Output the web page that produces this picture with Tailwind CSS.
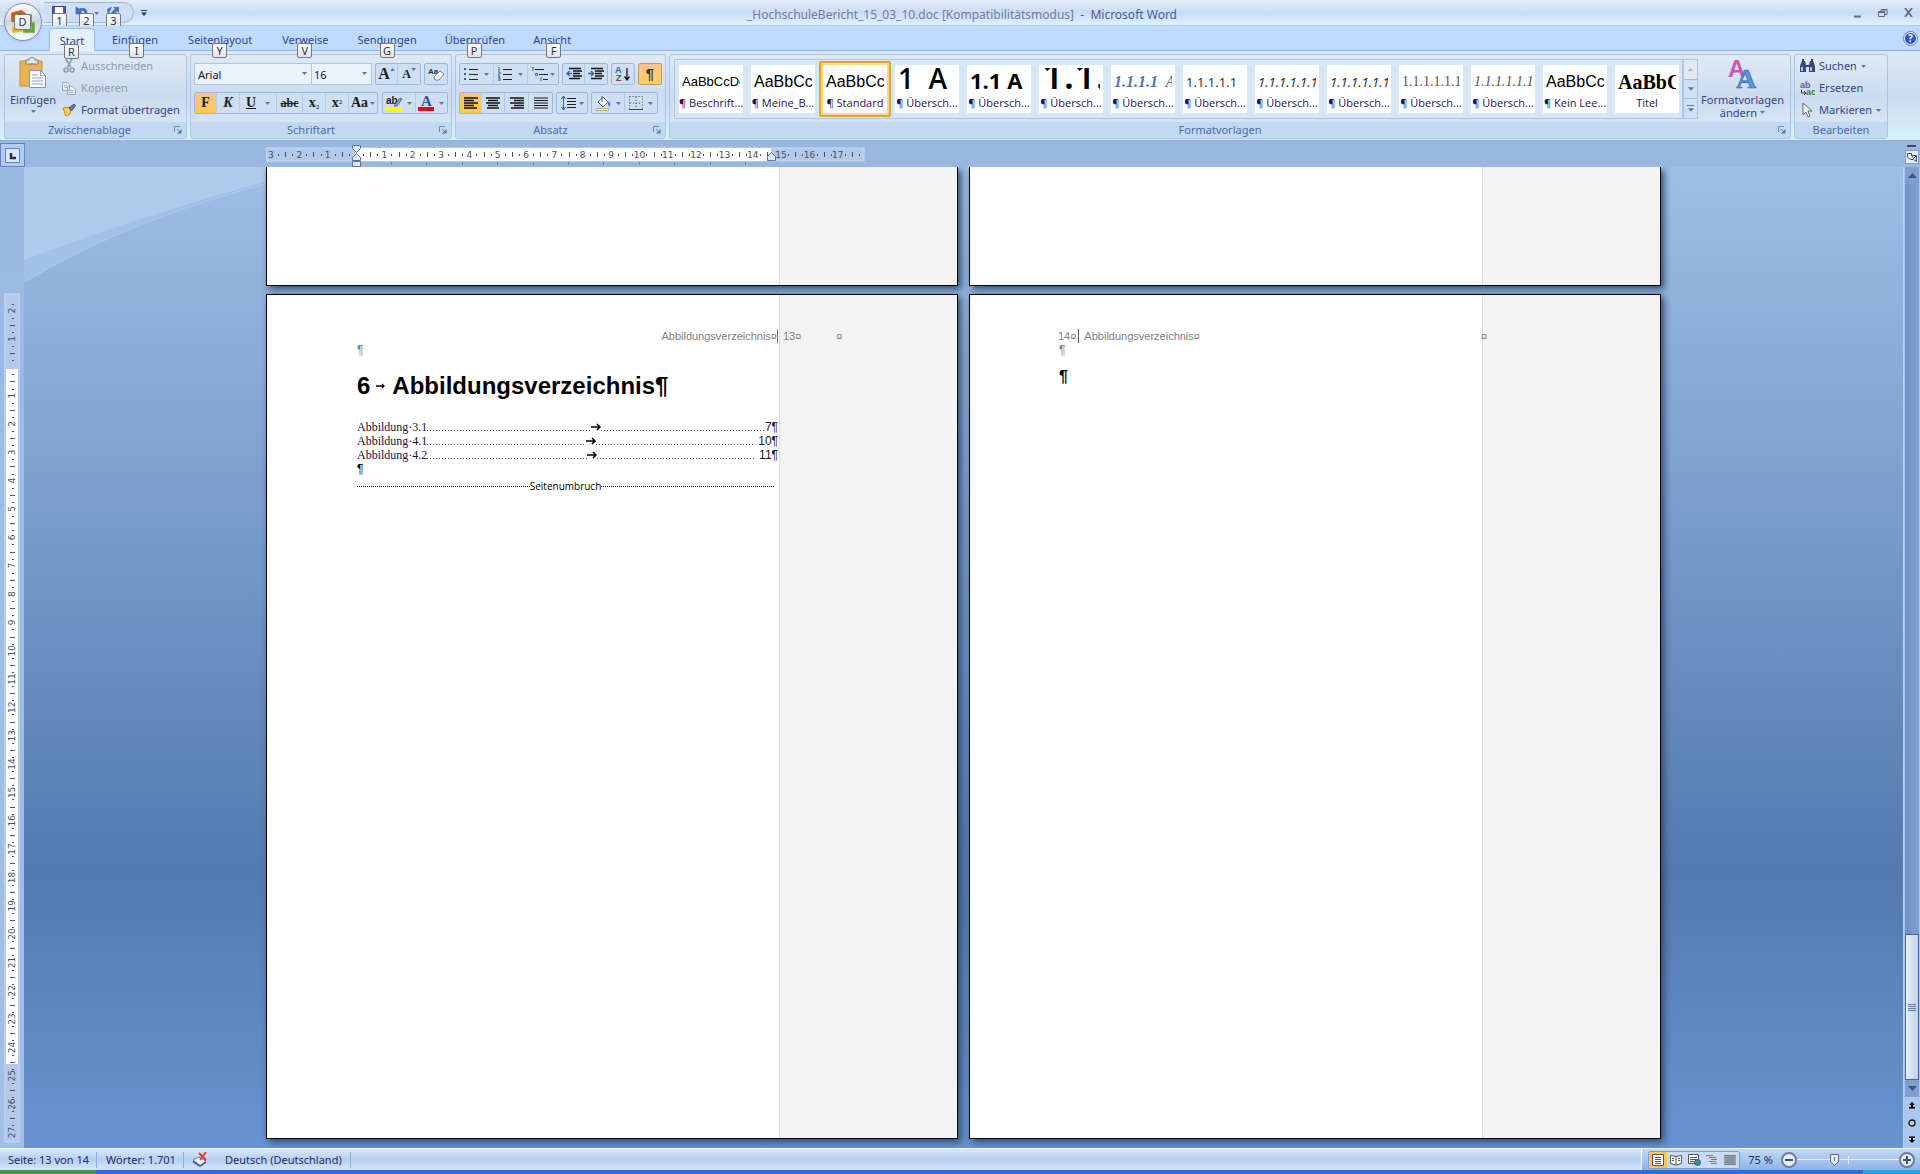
<!DOCTYPE html>
<html lang="de">
<head>
<meta charset="UTF-8">
<meta name="viewport" content="width=device-width, initial-scale=1.0">
<title>_HochschuleBericht_15_03_10.doc - Microsoft Word</title>
<script src="https://cdn.jsdelivr.net/npm/@tailwindcss/browser@4"></script>
</head>
<body class="h-screen flex flex-col overflow-hidden bg-[#9ab7e0] font-['Noto_Sans',sans-serif] text-[11px] leading-4 text-[#35418c]">

<!-- shared symbols -->
<svg class="hidden">
    <symbol id="down" viewBox="0 0 5 3"><path d="M0 0h5L2.500 3z" fill="#5b76a8"/></symbol>
    <symbol id="launcher" viewBox="0 0 8 8"><path d="M.5 6V.5H6" fill="none" stroke="#6b8bbd"/><path d="M3 3l3 3" stroke="#6b8bbd"/><path d="M7.500 3v4.500H3z" fill="#5878ae"/></symbol>
    <symbol id="bars" viewBox="0 0 14 12"><path d="M0 1h14M0 3.500h14M0 6h14M0 8.500h14M0 11h14" stroke="currentColor" stroke-width="1.200"/></symbol>
</svg>

<!-- Title bar -->
<header class="relative h-[26px] shrink-0 flex items-center bg-linear-to-b from-[#e3ecf8] via-[#cadcf5] to-[#dff0fd] border-b border-[#a9cbe8]">
    <div class="ml-[44px] h-[21px] w-[90px] flex items-start gap-[9px] pt-[3px] pl-[8px] rounded-r-full border border-l-0 border-[#9fb9dc] bg-[#cfe0f6]">
        <button aria-label="Speichern" class="relative">
            <svg class="w-[14px] h-[14px]" viewBox="0 0 14 14"><path d="M.5.5h13v13H.5z" fill="#5b58b4" stroke="#3c3a8c"/><path d="M3 1h8v6H3z" fill="#fff"/><path d="M4 9h6v4H4z" fill="#ccd"/></svg>
            <span class="absolute left-0 top-[7px] w-[15px] h-[15px] leading-[13px] text-center rounded-xs border border-[#777] bg-linear-to-b from-white to-[#dde3ee] text-[#333]">1</span>
        </button>
        <button aria-label="Rückgängig" class="relative flex items-center gap-[5px]">
            <svg class="w-[14px] h-[14px]" viewBox="0 0 14 14"><path d="M1 1v7h7L5.500 5.500C9 3 11 6 9 12c5-4 4-12-5-9z" fill="#4574c8" stroke="#2f57a5" stroke-width=".6"/></svg>
            <svg class="w-[5px] h-[3px]"><use href="#down"/></svg>
            <span class="absolute left-[4px] top-[7px] w-[15px] h-[15px] leading-[13px] text-center rounded-xs border border-[#777] bg-linear-to-b from-white to-[#dde3ee] text-[#333]">2</span>
        </button>
        <button aria-label="Wiederholen" class="relative -ml-[2px]">
            <svg class="w-[14px] h-[14px]" viewBox="0 0 14 14"><path d="M7 1h6v6l-2-2c-3 6-7 8-8 8 0-5 2-7 6-10zM1 4c1-2 3-3 5-3L2 9z" fill="#4574c8"/></svg>
            <span class="absolute left-0 top-[7px] w-[15px] h-[15px] leading-[13px] text-center rounded-xs border border-[#777] bg-linear-to-b from-white to-[#dde3ee] text-[#333]">3</span>
        </button>
    </div>
    <button aria-label="Symbolleiste anpassen" class="ml-[7px]"><svg class="w-[6px] h-[6px]" viewBox="0 0 6 6"><path d="M0 .5h6" stroke="#223a6c"/><path d="M0 2.500h6L3 6z" fill="#223a6c"/></svg></button>
    <h1 class="absolute inset-x-0 top-[6px] pl-[4px] pointer-events-none text-center text-[12px] leading-[18px] whitespace-pre text-[#46599e]"><span class="text-[#76799d]">_HochschuleBericht_15_03_10.doc [Kompatibilitätsmodus]</span>  -  Microsoft Word</h1>
    <div class="ml-auto mr-[7px] flex items-center gap-[16px]">
        <button aria-label="Minimieren"><svg class="w-[8px] h-[10px]" viewBox="0 0 8 10"><path d="M0 8.500h7" stroke="#5d6a82" stroke-width="2"/></svg></button>
        <button aria-label="Wiederherstellen"><svg class="w-[10px] h-[10px]" viewBox="0 0 10 10" fill="none" stroke="#5d6a82"><path d="M.5 3.500h6v5h-6zM.5 4.500h6M3 2.500V1.500h6v5H7M3 2h6"/></svg></button>
        <button aria-label="Schließen"><svg class="w-[9px] h-[9px]" viewBox="0 0 9 9"><path d="M1 0l7 9M8 0L1 9" stroke="#5d6a82" stroke-width="1.800"/></svg></button>
    </div>
    <!-- Office button overlaps title bar and tabs -->
    <button aria-label="Office" class="absolute left-[4px] top-[3px] z-10 w-[38px] h-[38px] rounded-full border border-[#8090ab] bg-linear-to-b from-white via-[#cdd3de] to-white shadow">
        <svg class="absolute left-[6px] top-[6px] w-[24px] h-[24px]" viewBox="0 0 24 24" fill="none" stroke-width="3.500"><path d="M2 12V4l8-2 3 2v6" stroke="#e2521c"/><path d="M13 10V6h6v6h-5" stroke="#3c7fd0"/><path d="M11 13v7l-8 1v-4" stroke="#f3b51d"/><path d="M14 14h8v7h-8z" stroke="#67a72b"/></svg>
        <span class="absolute left-[9px] top-[10px] w-[17px] h-[16px] leading-[14px] text-center rounded-xs border border-[#777] bg-linear-to-b from-white to-[#dde3ee] text-[#333]">D</span>
    </button>
</header>

<!-- Tabs -->
<nav class="relative h-[25px] shrink-0 flex items-end pl-[49px] pr-[8px] bg-[#bfdbff] border-b border-[#8db2e3]">
    <button class="relative w-[46px] h-[23px] pt-px -mb-px rounded-t border border-b-0 border-[#9dbde6] bg-[#e6f0fb]">Start<span class="absolute left-[14px] top-[15px] z-10 w-[15px] h-[15px] leading-[13px] text-center rounded-xs border border-[#777] bg-linear-to-b from-white to-[#dde3ee] text-[#333]">R</span></button>
    <button class="relative h-[22px] pt-px pl-[17px] pr-[15px]">Einfügen<span class="absolute left-[34px] top-[15px] z-10 w-[15px] h-[15px] leading-[13px] text-center rounded-xs border border-[#777] bg-linear-to-b from-white to-[#dde3ee] text-[#333]">I</span></button>
    <button class="relative h-[22px] pt-px px-[15px]">Seitenlayout<span class="absolute left-[39px] top-[15px] z-10 w-[15px] h-[15px] leading-[13px] text-center rounded-xs border border-[#777] bg-linear-to-b from-white to-[#dde3ee] text-[#333]">Y</span></button>
    <button class="relative h-[22px] pt-px px-[15px]">Verweise<span class="absolute left-[30px] top-[15px] z-10 w-[15px] h-[15px] leading-[13px] text-center rounded-xs border border-[#777] bg-linear-to-b from-white to-[#dde3ee] text-[#333]">V</span></button>
    <button class="relative h-[22px] pt-px px-[14px]">Sendungen<span class="absolute left-[36px] top-[15px] z-10 w-[15px] h-[15px] leading-[13px] text-center rounded-xs border border-[#777] bg-linear-to-b from-white to-[#dde3ee] text-[#333]">G</span></button>
    <button class="relative h-[22px] pt-px px-[14px]">Überprüfen<span class="absolute left-[36px] top-[15px] z-10 w-[15px] h-[15px] leading-[13px] text-center rounded-xs border border-[#777] bg-linear-to-b from-white to-[#dde3ee] text-[#333]">P</span></button>
    <button class="relative h-[22px] pt-px px-[14px]">Ansicht<span class="absolute left-[27px] top-[15px] z-10 w-[15px] h-[15px] leading-[13px] text-center rounded-xs border border-[#777] bg-linear-to-b from-white to-[#dde3ee] text-[#333]">F</span></button>
    <button aria-label="Hilfe" class="ml-auto mb-[5px] -mr-[5px] w-[13px] h-[13px] rounded-full border border-white bg-[#2a55c4] text-white text-[10px] leading-[11px] font-bold outline outline-[#5b7fd0]">?</button>
</nav>

<!-- Ribbon -->
<section class="h-[90px] shrink-0 flex gap-[3px] pt-[3px] pb-[1px] pl-[4px] pr-[32px] bg-linear-to-b from-[#dce7f4] via-[#c9dcf1] to-[#d9f1fd] border-b border-[#8eaed6]">
    <fieldset class="w-[183px] flex flex-col rounded-[3px] border border-[#a9c4e4] bg-linear-to-b from-[#dfe9f5] via-[#cbdcf0] to-[#dbe9f9] overflow-hidden">
        <div class="flex-1 flex gap-[6px] pl-[5px] pt-[2px]">
            <button class="flex flex-col items-center">
                <svg class="w-[30px] h-[32px]" viewBox="0 0 30 32"><path d="M2 4h22v25H2z" fill="#e9b355" stroke="#c58d34"/><path d="M8 3h3c0-4 6-4 6 0h3v4H8z" fill="#e5e5e8" stroke="#777"/><path d="M11.500 13.500h11l5 5v12h-16z" fill="#fff" stroke="#8a93a8"/><path d="M22.500 13.500v5h5M14 18h6M14 21h11M14 24h11M14 27h11" fill="none" stroke="#8aa0c8"/></svg>
                <span class="pt-[3px]">Einfügen</span>
                <svg class="w-[5px] h-[3px] mt-[2px]"><use href="#down"/></svg>
            </button>
            <div class="flex flex-col gap-[6px] items-start pt-[1px]">
                <button class="flex items-center gap-[5px] text-[#929aa8]"><svg class="w-[14px] h-[14px]" viewBox="0 0 14 14" fill="none" stroke="#8d9bb3" stroke-width="1.600"><path d="M4 0l4.500 8M10 0L5.500 8"/><circle cx="4" cy="11" r="2"/><circle cx="10" cy="11" r="2"/></svg>Ausschneiden</button>
                <button class="flex items-center gap-[5px] text-[#929aa8]"><svg class="w-[14px] h-[14px]" viewBox="0 0 14 14" fill="#eef2f8" stroke="#9aa9c2"><path d="M.5 1.500h5l2 2v6h-7zM5.500 5.500h5l3 3v5h-8zM7 9.500h4M7 11.500h4M2 4.500h3M2 6.500h3"/></svg>Kopieren</button>
                <button class="flex items-center gap-[5px]"><svg class="w-[14px] h-[14px]" viewBox="0 0 14 14"><path d="M1 5l6-1 2 3-1 4-4 2z" fill="#f6d254" stroke="#b48d23"/><path d="M7 5l5-4 1.500 1.500L9.500 8z" fill="#667aa8" stroke="#3c4d7a"/></svg>Format übertragen</button>
            </div>
        </div>
        <div class="h-[16px] flex items-center pr-[4px] bg-[#c2d9f1] text-[#4a6bad]"><span class="flex-1 text-center">Zwischenablage</span><button aria-label="Zwischenablage öffnen"><svg class="w-[8px] h-[8px]"><use href="#launcher"/></svg></button></div>
    </fieldset>

    <fieldset class="w-[262px] flex flex-col rounded-[3px] border border-[#a9c4e4] bg-linear-to-b from-[#dfe9f5] via-[#cbdcf0] to-[#dbe9f9] overflow-hidden">
        <div class="flex-1 flex flex-col gap-[7px] px-[3px] pt-[8px] text-[#1d1d1d]">
            <div class="flex gap-[3px] h-[22px]">
                <div class="flex border border-[#abc6e6] bg-[#eaf2fb]">
                    <div class="relative w-[117px] border-r border-[#abc6e6]"><input aria-label="Schriftart" value="Arial" class="w-full h-full pl-[3px] text-[#1b1040]"><svg class="absolute right-[4px] top-[8px] w-[5px] h-[3px]"><use href="#down"/></svg></div>
                    <div class="relative w-[59px]"><input aria-label="Schriftgrad" value="16" class="w-full h-full pl-[2px] text-[#1b1040]"><svg class="absolute right-[4px] top-[8px] w-[5px] h-[3px]"><use href="#down"/></svg></div>
                </div>
                <div class="flex rounded-xs border border-[#9bb8dc] bg-[#cfdff3] font-['Liberation_Serif',serif] font-bold">
                    <button aria-label="Schrift vergrößern" class="w-[22px] text-[16px] flex items-center justify-center border-r border-[#b5cbe8]">A<svg class="w-[5px] h-[3px] -mt-[10px] rotate-180"><use href="#down"/></svg></button>
                    <button aria-label="Schrift verkleinern" class="w-[22px] text-[12px] flex items-center justify-center">A<svg class="w-[5px] h-[3px] -mt-[10px]"><use href="#down"/></svg></button>
                </div>
                <button aria-label="Formatierung löschen" class="w-[24px] flex items-center justify-center rounded-xs border border-[#9bb8dc] bg-[#cfdff3]"><svg class="w-[17px] h-[16px]" viewBox="0 0 17 16"><text x="0" y="8" font-size="8" font-family="Liberation Sans" font-weight="bold" fill="#333">Aa</text><path d="M6 11l6-6 4 3-5 6H7z" fill="#fff" stroke="#6a7fae"/></svg></button>
            </div>
            <div class="flex gap-[4px] h-[22px] font-['Liberation_Serif',serif] font-bold text-[14px]">
                <div class="flex rounded-xs border border-[#9bb8dc] bg-[#cfdff3] divide-x divide-[#b5cbe8]">
                    <button aria-label="Fett" class="w-[22px] bg-linear-to-b from-[#f9c284] to-[#fdc94b]">F</button>
                    <button aria-label="Kursiv" class="w-[23px] italic">K</button>
                    <button aria-label="Unterstrichen" class="w-[37px] flex items-center justify-center gap-[9px]"><span class="underline">U</span><svg class="w-[5px] h-[3px]"><use href="#down"/></svg></button>
                    <button aria-label="Durchgestrichen" class="w-[26px] line-through text-[12px]">abc</button>
                    <button aria-label="Tiefgestellt" class="w-[23px]">x<sub class="text-[7px] text-[#35418c]">2</sub></button>
                    <button aria-label="Hochgestellt" class="w-[23px]">x<sup class="text-[7px] text-[#35418c]">2</sup></button>
                    <button aria-label="Groß-/Kleinschreibung" class="w-[28px] flex items-center justify-center gap-[2px]">Aa<svg class="w-[5px] h-[3px]"><use href="#down"/></svg></button>
                </div>
                <div class="flex flex-1 rounded-xs border border-[#9bb8dc] bg-[#cfdff3] divide-x divide-[#b5cbe8]">
                    <button aria-label="Texthervorhebungsfarbe" class="flex-1 flex items-center justify-center gap-[4px]"><svg class="w-[17px] h-[17px]" viewBox="0 0 17 17"><path d="M0 12h16v4H0z" fill="#ff0"/><text x="0" y="9" font-size="10" font-family="Liberation Sans" fill="#222">ab</text><path d="M8 11l6-8 2 1-5 7z" fill="#8fa9d8" stroke="#39507f" stroke-width=".8"/></svg><svg class="w-[5px] h-[3px]"><use href="#down"/></svg></button>
                    <button aria-label="Schriftfarbe" class="flex-1 flex items-center justify-center gap-[4px]"><svg class="w-[17px] h-[17px]" viewBox="0 0 17 17"><path d="M0 12h16v4H0z" fill="#e3001b"/><text x="3" y="11" font-size="15" font-weight="bold" font-family="Liberation Serif" fill="#35529b">A</text></svg><svg class="w-[5px] h-[3px]"><use href="#down"/></svg></button>
                </div>
            </div>
        </div>
        <div class="h-[16px] flex items-center pr-[4px] bg-[#c2d9f1] text-[#4a6bad]"><span class="flex-1 pr-[8px] text-center">Schriftart</span><button aria-label="Schriftart öffnen"><svg class="w-[8px] h-[8px]"><use href="#launcher"/></svg></button></div>
    </fieldset>

    <fieldset class="w-[208px] flex flex-col rounded-[3px] border border-[#a9c4e4] bg-linear-to-b from-[#dfe9f5] via-[#cbdcf0] to-[#dbe9f9] overflow-hidden">
        <div class="flex-1 flex flex-col gap-[7px] px-[3px] pt-[8px] text-[#111]">
            <div class="flex gap-[3px] h-[22px]">
                <div class="flex rounded-xs border border-[#9bb8dc] bg-[#cfdff3] divide-x divide-[#b5cbe8]">
                    <button aria-label="Aufzählungszeichen" class="w-[34px] flex items-center justify-center gap-[6px]"><svg class="w-[14px] h-[14px]" viewBox="0 0 14 14"><path d="M5 2.500h9M5 7.500h9M5 12.500h9" stroke="#222"/><path d="M0 1h2v2H0zM0 6h2v2H0zM0 11h2v2H0z" fill="#3b5ea8"/></svg><svg class="w-[5px] h-[3px]"><use href="#down"/></svg></button>
                    <button aria-label="Nummerierung" class="w-[34px] flex items-center justify-center gap-[6px]"><svg class="w-[14px] h-[14px]" viewBox="0 0 14 14"><path d="M5 2.500h9M5 7.500h9M5 12.500h9" stroke="#222"/><path d="M1 0v4M0 5h2v2H0v2h2M0 10h2v4H0M0 12h2" stroke="#3b5ea8" fill="none"/></svg><svg class="w-[5px] h-[3px]"><use href="#down"/></svg></button>
                    <button aria-label="Liste mit mehreren Ebenen" class="w-[30px] flex items-center justify-center gap-[2px]"><svg class="w-[16px] h-[14px]" viewBox="0 0 16 14"><path d="M3 2.500h9M7 7.500h9M11 12.500h5" stroke="#222"/><path d="M1 0v4M3.500 6.500h2v2h-2zM9 10v4" stroke="#3b5ea8" fill="none"/></svg><svg class="w-[5px] h-[3px]"><use href="#down"/></svg></button>
                </div>
                <div class="flex rounded-xs border border-[#9bb8dc] bg-[#cfdff3] divide-x divide-[#b5cbe8]">
                    <button aria-label="Einzug verkleinern" class="w-[22px] flex items-center justify-center"><svg class="w-[16px] h-[14px]" viewBox="0 0 16 14"><path d="M3 1.500h12M7 4h9M7 6.500h7M7 9h9M3 11.500h11" stroke="#111" stroke-width="1.400"/><path d="M6 6.500H1M3.500 4L1 6.500 3.500 9" fill="none" stroke="#2f66c4" stroke-width="1.500"/></svg></button>
                    <button aria-label="Einzug vergrößern" class="w-[22px] flex items-center justify-center"><svg class="w-[16px] h-[14px]" viewBox="0 0 16 14"><path d="M3 1.500h12M7 4h9M7 6.500h7M7 9h9M3 11.500h11" stroke="#111" stroke-width="1.400"/><path d="M0 6.500h5M3 4l2.500 2.500L3 9" fill="none" stroke="#2f66c4" stroke-width="1.500"/></svg></button>
                </div>
                <button aria-label="Sortieren" class="w-[24px] flex items-center justify-center rounded-xs border border-[#9bb8dc] bg-[#cfdff3]"><svg class="w-[16px] h-[16px]" viewBox="0 0 16 16"><text x="0" y="7" font-size="9" font-weight="bold" font-family="Liberation Sans" fill="#3b5ea8">A</text><text x="1" y="15" font-size="9" font-weight="bold" font-family="Liberation Sans" fill="#a5323c">Z</text><path d="M12 2v11M9.500 10.500L12 14l2.500-3.500" fill="none" stroke="#111" stroke-width="1.300"/></svg></button>
                <button aria-label="Alle anzeigen" class="w-[24px] rounded-xs border border-[#c09a5c] bg-linear-to-b from-[#fbc58b] to-[#fdcf5d] text-[15px] font-bold font-['Liberation_Sans',sans-serif] text-[#333]">¶</button>
            </div>
            <div class="flex gap-[3px] h-[22px]">
                <div class="flex rounded-xs border border-[#9bb8dc] bg-[#cfdff3] divide-x divide-[#b5cbe8]">
                    <button aria-label="Linksbündig" class="w-[22px] flex items-center justify-center bg-linear-to-b from-[#f9c284] to-[#fdc94b]"><svg class="w-[14px] h-[12px]" viewBox="0 0 14 12"><path d="M0 1h14M0 3.500h10M0 6h14M0 8.500h10M0 11h13" stroke="#111" stroke-width="1.300"/></svg></button>
                    <button aria-label="Zentriert" class="w-[23px] flex items-center justify-center"><svg class="w-[14px] h-[12px]" viewBox="0 0 14 12"><path d="M0 1h14M2 3.500h10M0 6h14M2 8.500h10M1 11h12" stroke="#111" stroke-width="1.300"/></svg></button>
                    <button aria-label="Rechtsbündig" class="w-[24px] flex items-center justify-center"><svg class="w-[14px] h-[12px]" viewBox="0 0 14 12"><path d="M0 1h14M4 3.500h10M0 6h14M4 8.500h10M1 11h13" stroke="#111" stroke-width="1.300"/></svg></button>
                    <button aria-label="Blocksatz" class="w-[23px] flex items-center justify-center"><svg class="w-[16px] h-[12px]"><use href="#bars"/></svg></button>
                </div>
                <button aria-label="Zeilenabstand" class="w-[32px] flex items-center justify-center gap-[3px] rounded-xs border border-[#9bb8dc] bg-[#cfdff3]"><svg class="w-[15px] h-[16px]" viewBox="0 0 15 16"><path d="M6 3.500h9M6 6.500h9M6 9.500h9M6 12.500h9" stroke="#222"/><path d="M2.500 1v14M.5 4l2-3 2 3M.5 12l2 3 2-3" fill="none" stroke="#3465bd"/></svg><svg class="w-[5px] h-[3px]"><use href="#down"/></svg></button>
                <div class="flex rounded-xs border border-[#9bb8dc] bg-[#cfdff3] divide-x divide-[#b5cbe8]">
                    <button aria-label="Schattierung" class="w-[33px] flex items-center justify-center gap-[5px]"><svg class="w-[16px] h-[16px]" viewBox="0 0 16 16"><path d="M3 7l5-5 5 5-5 5z" fill="#f4f7fc" stroke="#55688f"/><path d="M7 1v6" stroke="#55688f"/><path d="M12 6c4 1 4 4 2 6z" fill="#4472c4"/><path d="M1.500 13.500h12v2h-12z" fill="#fff" stroke="#b9a884"/></svg><svg class="w-[5px] h-[3px]"><use href="#down"/></svg></button>
                    <button aria-label="Rahmen" class="w-[32px] flex items-center justify-center gap-[5px]"><svg class="w-[14px] h-[14px]" viewBox="0 0 14 14" fill="none" stroke="#444"><path d="M.5.5h13v13M.5.5v13M7 1v12M1 7h12" stroke-dasharray="1 2"/><path d="M0 13.500h14"/></svg><svg class="w-[5px] h-[3px]"><use href="#down"/></svg></button>
                </div>
            </div>
        </div>
        <div class="h-[16px] flex items-center pr-[4px] bg-[#c2d9f1] text-[#4a6bad]"><span class="flex-1 pr-[8px] text-center">Absatz</span><button aria-label="Absatz öffnen"><svg class="w-[8px] h-[8px]"><use href="#launcher"/></svg></button></div>
    </fieldset>

    <fieldset class="flex-1 min-w-0 flex flex-col rounded-[3px] border border-[#a9c4e4] bg-linear-to-b from-[#dfe9f5] via-[#cbdcf0] to-[#dbe9f9] overflow-hidden">
        <div class="flex-1 flex px-[4px] pt-[4px]">
            <div class="flex-1 min-w-0 flex items-center h-[60px] overflow-hidden border border-[#abc6e6] bg-[#d7e6f7] text-[#241457] font-['Open_Sans',sans-serif] whitespace-nowrap">
                <button class="w-[72px] shrink-0 h-[56px] p-[4px]"><span class="flex flex-col h-full bg-white"><span class="h-[30px] leading-[34px] mx-[3px] overflow-hidden text-left text-black font-['Liberation_Sans',sans-serif] text-[13px]">AaBbCcDd</span><span>¶ Beschrift...</span></span></button>
                <button class="w-[72px] shrink-0 h-[56px] p-[4px]"><span class="flex flex-col h-full bg-white"><span class="h-[30px] leading-[34px] mx-[3px] overflow-hidden text-left text-black font-['Liberation_Sans',sans-serif] text-[16px]">AaBbCc</span><span>¶ Meine_B...</span></span></button>
                <button class="w-[72px] shrink-0 h-[56px] p-[2px] rounded-xs border-2 border-[#e0a235] bg-[#fbd980]"><span class="flex flex-col h-full bg-white"><span class="h-[30px] leading-[34px] mx-[3px] overflow-hidden text-left text-black font-['Liberation_Sans',sans-serif] text-[16px]">AaBbCc</span><span>¶ Standard</span></span></button>
                <button class="w-[72px] shrink-0 h-[56px] p-[4px]"><span class="flex flex-col h-full bg-white"><span class="h-[30px] leading-[26px] mx-[3px] overflow-hidden whitespace-pre text-left text-black font-semibold text-[28px]">1  A</span><span>¶ Übersch...</span></span></button>
                <button class="w-[72px] shrink-0 h-[56px] p-[4px]"><span class="flex flex-col h-full bg-white"><span class="h-[30px] leading-[30px] mx-[3px] overflow-hidden whitespace-pre text-left text-black font-bold text-[22px]">1.1 A</span><span>¶ Übersch...</span></span></button>
                <button class="w-[72px] shrink-0 h-[56px] p-[4px]"><span class="flex flex-col h-full bg-white"><span class="mt-[3px] h-[27px] leading-[13px] mx-[3px] overflow-hidden text-left text-black font-semibold text-[38px]">1.1.</span><span>¶ Übersch...</span></span></button>
                <button class="w-[72px] shrink-0 h-[56px] p-[4px]"><span class="flex flex-col h-full bg-white"><span class="h-[30px] leading-[34px] mx-[3px] overflow-hidden whitespace-pre text-left text-[#4f75ad] font-bold italic font-['Liberation_Serif',serif] text-[16px]">1.1.1.1  A</span><span>¶ Übersch...</span></span></button>
                <button class="w-[72px] shrink-0 h-[56px] p-[4px]"><span class="flex flex-col h-full bg-white"><span class="h-[30px] leading-[34px] mx-[3px] overflow-hidden text-left text-[#333] font-['Noto_Sans',sans-serif] text-[13px]">1.1.1.1.1</span><span>¶ Übersch...</span></span></button>
                <button class="w-[72px] shrink-0 h-[56px] p-[4px]"><span class="flex flex-col h-full bg-white"><span class="h-[30px] leading-[34px] mx-[3px] overflow-hidden text-left text-[#333] italic font-['Noto_Sans',sans-serif] text-[13px]">1.1.1.1.1.1</span><span>¶ Übersch...</span></span></button>
                <button class="w-[72px] shrink-0 h-[56px] p-[4px]"><span class="flex flex-col h-full bg-white"><span class="h-[30px] leading-[34px] mx-[3px] overflow-hidden text-left text-[#333] italic font-['Noto_Sans',sans-serif] text-[13px]">1.1.1.1.1.1</span><span>¶ Übersch...</span></span></button>
                <button class="w-[72px] shrink-0 h-[56px] p-[4px]"><span class="flex flex-col h-full bg-white"><span class="h-[30px] leading-[34px] mx-[3px] overflow-hidden text-left text-[#555] font-['Liberation_Serif',serif] text-[14px]">1.1.1.1.1.1.</span><span>¶ Übersch...</span></span></button>
                <button class="w-[72px] shrink-0 h-[56px] p-[4px]"><span class="flex flex-col h-full bg-white"><span class="h-[30px] leading-[34px] mx-[3px] overflow-hidden text-left text-[#555] italic font-['Liberation_Serif',serif] text-[14px]">1.1.1.1.1.1.</span><span>¶ Übersch...</span></span></button>
                <button class="w-[72px] shrink-0 h-[56px] p-[4px]"><span class="flex flex-col h-full bg-white"><span class="h-[30px] leading-[34px] mx-[3px] overflow-hidden text-left text-black font-['Liberation_Sans',sans-serif] text-[16px]">AaBbCc</span><span>¶ Kein Lee...</span></span></button>
                <button class="w-[72px] shrink-0 h-[56px] p-[4px]"><span class="flex flex-col h-full bg-white"><span class="h-[30px] leading-[34px] mx-[3px] overflow-hidden text-left text-black font-bold font-['Liberation_Serif',serif] text-[20px]">AaBbC</span><span>Titel</span></span></button>
            </div>
            <div class="w-[15px] h-[60px] flex flex-col border border-[#abc6e6] divide-y divide-[#9fbce0] bg-[#cfe0f5]">
                <button aria-label="Nach oben" class="flex-1 flex items-center justify-center bg-[#e4e8ee]"><svg class="w-[5px] h-[3px] rotate-180 opacity-50"><use href="#down"/></svg></button>
                <button aria-label="Nach unten" class="flex-1 flex items-center justify-center"><svg class="w-[6px] h-[4px]"><use href="#down"/></svg></button>
                <button aria-label="Weitere" class="flex-1 flex flex-col gap-[2px] items-center justify-center"><span class="w-[7px] h-px bg-[#5b76a8]"></span><svg class="w-[6px] h-[4px]"><use href="#down"/></svg></button>
            </div>
            <button class="w-[87px] ml-[1px] flex flex-col items-center leading-[13px]">
                <svg class="w-[32px] h-[30px]" viewBox="0 0 32 30" font-family="Liberation Serif" font-weight="bold"><text x="1" y="18" font-size="24" font-family="Liberation Sans" fill="#c957b4">A</text><text x="9" y="29" font-size="28" fill="#5b93dd" stroke="#3465b0" stroke-width=".6">A</text></svg>
                <span class="pt-[4px]">Formatvorlagen</span>
                <span class="flex items-center gap-[3px]">ändern<svg class="w-[5px] h-[3px]"><use href="#down"/></svg></span>
            </button>
        </div>
        <div class="h-[16px] flex items-center pr-[4px] bg-[#c2d9f1] text-[#4a6bad]"><span class="flex-1 text-center pr-[8px]">Formatvorlagen</span><button aria-label="Formatvorlagen öffnen"><svg class="w-[8px] h-[8px]"><use href="#launcher"/></svg></button></div>
    </fieldset>

    <fieldset class="w-[94px] flex flex-col rounded-[3px] border border-[#a9c4e4] bg-linear-to-b from-[#dfe9f5] via-[#cbdcf0] to-[#dbe9f9] overflow-hidden">
        <div class="flex-1 flex flex-col items-start gap-[6px] pl-[5px] pt-[3px]">
            <button class="flex items-center gap-[4px]"><svg class="w-[15px] h-[14px]" viewBox="0 0 15 14"><path d="M0 13V7l2-5h3l1 4h3l1-4h3l2 5v6H9V8H6v5z" fill="#33477c"/><path d="M2 8v4M11 8v4" stroke="#dfe8f7" stroke-width="1.500"/><path d="M3 0v2M12 0v2" stroke="#33477c" stroke-width="2"/></svg>Suchen<svg class="w-[5px] h-[3px]"><use href="#down"/></svg></button>
            <button class="flex items-center gap-[4px]"><svg class="w-[15px] h-[15px]" viewBox="0 0 15 15" font-family="Liberation Sans" font-size="9" font-weight="bold"><text x="0" y="7" fill="#666">ab</text><text x="6" y="14" fill="#2f8a3a">ac</text><path d="M1.500 9v3h4M4 10l2 2-2 2" fill="none" stroke="#333"/></svg>Ersetzen</button>
            <button class="flex items-center gap-[4px]"><svg class="w-[15px] h-[15px]" viewBox="0 0 15 15"><path d="M3 0v12l3-3 2 5 2-1-2-5h4z" fill="#fff" stroke="#555c78"/></svg>Markieren<svg class="w-[5px] h-[3px]"><use href="#down"/></svg></button>
        </div>
        <div class="h-[16px] bg-[#c2d9f1] text-[#4a6bad] text-center">Bearbeiten</div>
    </fieldset>
</section>

<!-- Horizontal ruler -->
<div class="h-[26px] shrink-0 flex items-start pt-[2px]">
    <button aria-label="Tabstopp" class="w-[25px] h-[24px] flex items-center justify-center border border-[#5f83c8] bg-[#b3cbee]"><svg class="w-[15px] h-[15px]" viewBox="0 0 15 15"><path d="M.5.5h14v14H.5z" fill="#dce8fa" stroke="#5f83c8"/><path d="M6 5v5h5" fill="none" stroke="#222e5c" stroke-width="2.500"/></svg></button>
    <div class="flex-1 flex justify-center pr-[2px]">
        <svg id="hruler" class="w-[1394px] h-[24px]" viewBox="266 143 1394 24" font-family="DejaVu Sans" font-size="9" fill="#44506a" text-anchor="middle">
            <rect x="266" y="148" width="598" height="13" fill="#b4c9ea" stroke="#c9dbf5"/>
            <rect x="355" y="148" width="416" height="13" fill="#fff"/>
        </svg>
    </div>
    <button aria-label="Lineal" class="w-[17px] flex flex-col items-center gap-[3px] pt-[2px]"><span class="w-[9px] h-[2px] bg-[#33477c]"></span><svg class="w-[14px] h-[14px]" viewBox="0 0 14 14"><path d="M.5.5h13v13H.5z" fill="#e4edfa" stroke="#8899b8"/><path d="M2.500 3.500h4v2h5v6l-3-2H6l-3.500-2z" fill="#fff" stroke="#33477c"/><path d="M6.500 5.500l2 3 3-3" fill="none" stroke="#33477c"/></svg></button>
</div>

<!-- Workspace -->
<main class="flex-1 min-h-0 flex">
    <div class="w-[24px] shrink-0 bg-linear-to-b from-[#9ab9e3] to-[#a3bfe6]">
        <svg id="vruler" class="w-[24px] h-[981px]" viewBox="0 167 24 981" font-family="DejaVu Sans" font-size="9" fill="#44506a" text-anchor="middle">
            <rect x="5" y="294" width="14" height="848" fill="#b4c9ea" stroke="#c9dbf5"/>
            <rect x="6" y="369" width="12" height="695" fill="#fff"/>
        </svg>
    </div>

    <div class="relative flex-1 overflow-hidden bg-linear-to-b from-[#9fbee7] from-0% via-[#527aaf] via-72% to-[#6794d0] to-100%">
        <svg class="absolute left-0 top-0 w-[300px] h-[116px]" viewBox="0 0 300 116">
            <path d="M0 0h300v0C200 22 90 60 0 115z" fill="#a3c0e6"/>
            <path d="M0 115C90 62 180 30 300 2" fill="none" stroke="#aac6ea" stroke-width="1.500"/>
            <path d="M0 0h300C200 24 100 55 0 93z" fill="#b0caeb"/>
        </svg>
        <div class="relative h-full grid grid-cols-[692px_692px] grid-rows-[119px_845px] justify-center gap-x-[11px] gap-y-[8px]">
            <div class="flex justify-end border border-t-0 border-black bg-white shadow-[3px_3px_7px_#34496f]"><div class="w-[178px] border-l border-[#dcdcdc] bg-[#f3f3f3]"></div></div>
            <div class="flex justify-end border border-t-0 border-black bg-white shadow-[3px_3px_7px_#34496f]"><div class="w-[178px] border-l border-[#dcdcdc] bg-[#f3f3f3]"></div></div>

            <article class="flex border border-black bg-white shadow-[3px_3px_7px_#34496f] font-['Liberation_Sans',sans-serif] text-black">
                <div class="flex-1 pl-[90px] pr-px pt-[34px]">
                    <p class="flex justify-end text-[11px] leading-[14px] text-[#808080]">Abbildungsverzeichnis¤<span class="w-px bg-[#777]"></span></p>
                    <p class="text-[12px] leading-[14px] text-[#808080]">¶</p>
                    <h2 class="pt-[15px] flex items-center text-[24px] leading-[28px] font-bold">6<svg class="w-[10px] h-[6px] mx-[6px]" viewBox="0 0 10 6"><path d="M0 3h8M6 1l2 2-2 2" fill="none" stroke="#000" stroke-width="1.300"/></svg>Abbildungsverzeichnis¶</h2>
                    <ul class="pt-[20px] text-[12px] leading-[14px] text-[#1c1030]">
                        <li class="flex items-center"><span class="font-['Liberation_Serif',serif]">Abbildung·3.1</span><span class="flex-1 self-end mb-[3px] h-px bg-[repeating-linear-gradient(90deg,#5a3a6c_0_1px,transparent_1px_3px)]"></span><svg class="w-[10px] h-[8px]" viewBox="0 0 10 8"><path d="M0 4h9M6 1l3 3-3 3" fill="none" stroke="#000" stroke-width="1.500"/></svg><span class="flex-1 self-end mb-[3px] h-px bg-[repeating-linear-gradient(90deg,#5a3a6c_0_1px,transparent_1px_3px)]"></span>7¶</li>
                        <li class="flex items-center"><span class="font-['Liberation_Serif',serif]">Abbildung·4.1</span><span class="flex-1 self-end mb-[3px] h-px bg-[repeating-linear-gradient(90deg,#5a3a6c_0_1px,transparent_1px_3px)]"></span><svg class="w-[10px] h-[8px]" viewBox="0 0 10 8"><path d="M0 4h9M6 1l3 3-3 3" fill="none" stroke="#000" stroke-width="1.500"/></svg><span class="flex-1 self-end mb-[3px] mr-[3px] h-px bg-[repeating-linear-gradient(90deg,#5a3a6c_0_1px,transparent_1px_3px)]"></span>10¶</li>
                        <li class="flex items-center"><span class="font-['Liberation_Serif',serif]">Abbildung·4.2</span><span class="flex-1 self-end mb-[3px] h-px bg-[repeating-linear-gradient(90deg,#5a3a6c_0_1px,transparent_1px_3px)]"></span><svg class="w-[10px] h-[8px]" viewBox="0 0 10 8"><path d="M0 4h9M6 1l3 3-3 3" fill="none" stroke="#000" stroke-width="1.500"/></svg><span class="flex-1 self-end mb-[3px] mr-[3px] h-px bg-[repeating-linear-gradient(90deg,#5a3a6c_0_1px,transparent_1px_3px)]"></span>11¶</li>
                    </ul>
                    <p class="text-[12px] leading-[14px]">¶</p>
                    <p class="mt-[2px] mr-[4px] flex items-center text-[10px] leading-[16px] font-['Open_Sans',sans-serif]"><span class="flex-1 h-px bg-[repeating-linear-gradient(90deg,#000_0_1px,transparent_1px_2px)]"></span>Seitenumbruch<span class="flex-1 h-px bg-[repeating-linear-gradient(90deg,#000_0_1px,transparent_1px_2px)]"></span></p>
                </div>
                <div class="w-[178px] flex gap-[35px] pl-[3px] pt-[34px] border-l border-[#dcdcdc] bg-[#f3f3f3] text-[11px] leading-[14px] text-[#808080]"><span>13¤</span><span>¤</span></div>
            </article>

            <article class="flex border border-black bg-white shadow-[3px_3px_7px_#34496f] font-['Liberation_Sans',sans-serif] text-black">
                <div class="flex-1 pl-[88px] pt-[34px]">
                    <p class="flex text-[11px] leading-[14px] text-[#808080]">14¤<span class="w-px ml-[2px] mr-[5px] bg-[#555]"></span><span class="flex-1">Abbildungsverzeichnis¤</span><span class="relative z-10 -mr-[5px]">¤</span></p>
                    <p class="pl-[1px] text-[12px] leading-[14px] text-[#808080]">¶</p>
                    <p class="pl-[1px] pt-[10px] text-[16px] leading-[20px] font-bold">¶</p>
                </div>
                <div class="w-[178px] border-l border-[#dcdcdc] bg-[#f3f3f3]"></div>
            </article>
        </div>
    </div>

    <!-- Vertical scrollbar -->
    <div class="w-[17px] shrink-0 flex flex-col items-center bg-[#a9c6ef] border-l border-[#bcd2f2]">
        <button aria-label="Nach oben scrollen" class="w-[14px] h-[17px] flex items-center justify-center bg-[#7f9fcf]"><svg class="w-[9px] h-[5px]" viewBox="0 0 9 5"><path d="M0 5h9L4.500 0z" fill="#3c5585"/></svg></button>
        <div class="w-[14px] flex-1 flex flex-col justify-end bg-linear-to-r from-[#6f92c6] to-[#7f9fcf]">
            <div class="h-[146px] flex flex-col items-center justify-center gap-px border border-[#4b6594] bg-linear-to-r from-[#e8f0fa] to-[#bfd0e8]">
                <span class="w-[8px] h-px bg-[#5b76a8]"></span><span class="w-[8px] h-px bg-[#5b76a8]"></span><span class="w-[8px] h-px bg-[#5b76a8]"></span><span class="w-[8px] h-px bg-[#5b76a8]"></span>
            </div>
        </div>
        <button aria-label="Nach unten scrollen" class="w-[14px] h-[17px] flex items-center justify-center bg-[#7f9fcf]"><svg class="w-[9px] h-[5px]" viewBox="0 0 9 5"><path d="M0 0h9L4.500 5z" fill="#3c5585"/></svg></button>
        <button aria-label="Vorherige Seite" class="h-[17px]"><svg class="w-[6px] h-[7px]" viewBox="0 0 6 7"><path d="M0 3l3-3 3 3zM2 3h2v2H2zM0 5h6v1.500H0z" fill="#000"/></svg></button>
        <button aria-label="Browseobjekt auswählen" class="h-[17px]"><svg class="w-[8px] h-[8px]" viewBox="0 0 8 8"><circle cx="4" cy="4" r="3" fill="#c4d4c4" stroke="#111" stroke-width="1.300"/></svg></button>
        <button aria-label="Nächste Seite" class="h-[17px]"><svg class="w-[6px] h-[7px]" viewBox="0 0 6 7"><path d="M0 .5h6V2H0zM2 2h2v2H2zM0 4h6L3 7z" fill="#000"/></svg></button>
    </div>
</main>

<!-- Status bar -->
<footer class="h-[22px] shrink-0 flex items-center border-t border-[#eef5fe] bg-linear-to-b from-[#d9e8fb] via-[#b6d0f2] to-[#d5e6fb] text-[#232a66]">
    <span class="w-[97px] pl-[8px] border-r border-[#8eaedb]">Seite: 13 von 14</span>
    <span class="w-[87px] pl-[9px] border-r border-[#8eaedb]">Wörter: 1.701</span>
    <button aria-label="Rechtschreibprüfung" class="pl-[8px] pr-[17px]"><svg class="w-[16px] h-[15px]" viewBox="0 0 16 15"><path d="M1 8l6-3 7 4-6 5z" fill="#eef3fb" stroke="#6179ae"/><path d="M1 9.500l7 4.500 6-4" fill="none" stroke="#3b4f8a" stroke-width="1.500"/><path d="M7 1l7 7M14 0L8 8" stroke="#e2401f" stroke-width="2"/></svg></button>
    <span class="pr-[8px] border-r border-[#8eaedb]">Deutsch (Deutschland)</span>
    <div class="ml-auto h-full flex items-center pl-[6px] pr-[5px] border-l border-white bg-linear-to-b from-[#c5d9f5] to-[#8fb3e6]">
        <div class="flex h-[18px] rounded-xs border border-[#7d9fd0] bg-[#c9dbf3] text-[#444]">
            <button aria-label="Seitenlayout" class="w-[18px] flex items-center justify-center bg-[#fbc65c]"><svg class="w-[12px] h-[12px]" viewBox="0 0 12 12"><path d="M.5.5h11v11H.5z" fill="#fff" stroke="#555"/><path d="M3 3.500h6M3 5.500h6M3 7.500h6M3 9.500h6" stroke="#555"/></svg></button>
            <button aria-label="Vollbild-Lesemodus" class="w-[18px] flex items-center justify-center"><svg class="w-[12px] h-[12px]" viewBox="0 0 12 12" fill="#fff" stroke="#555"><path d="M.5 1.500l5.500 1 5.500-1v8l-5.500 1.500L.5 9.500zM6 2v9M2 4.500h2M2 6.500h2M8 4.500h2M8 6.500h2"/></svg></button>
            <button aria-label="Weblayout" class="w-[18px] flex items-center justify-center"><svg class="w-[13px] h-[12px]" viewBox="0 0 13 12"><path d="M.5.5h10v9H.5z" fill="#fff" stroke="#555"/><path d="M2 3.500h7M2 5.500h7M2 7.500h4" stroke="#555"/><circle cx="9.500" cy="8.500" r="3" fill="#3e8f86" stroke="#27609b"/></svg></button>
            <button aria-label="Gliederung" class="w-[18px] flex items-center justify-center"><svg class="w-[12px] h-[12px]" viewBox="0 0 12 12"><path d="M0 1.500h7M3 3.500h7M5 5.500h6M3 7.500h7M5 9.500h6" stroke="#777"/></svg></button>
            <button aria-label="Entwurf" class="w-[18px] flex items-center justify-center"><svg class="w-[12px] h-[10px]"><use href="#bars"/></svg></button>
        </div>
        <button class="w-[41px] text-center">75 %</button>
        <button aria-label="Verkleinern" class="w-[16px] h-[16px] flex items-center justify-center rounded-full border-2 border-[#6b7f9f] bg-[#e8eef6]"><span class="w-[8px] h-[2px] bg-[#44536f]"></span></button>
        <div class="relative w-[102px] h-[16px] flex items-center">
            <span class="w-full h-px bg-[#e8f1fc]"></span>
            <span class="absolute left-[51px] top-[4px] w-px h-[8px] bg-[#e8f1fc]"></span>
            <input type="range" aria-label="Zoom" min="10" max="500" value="75" class="absolute inset-0 w-full opacity-0">
            <svg class="absolute left-[33px] top-[2px] w-[9px] h-[12px] pointer-events-none" viewBox="0 0 9 12"><path d="M.5.5h8v7l-4 4-4-4z" fill="#e4ecf7" stroke="#566a90"/><path d="M4.500 3v4" stroke="#566a90"/></svg>
        </div>
        <button aria-label="Vergrößern" class="w-[16px] h-[16px] flex items-center justify-center rounded-full border-2 border-[#6b7f9f] bg-[#e8eef6]"><svg class="w-[8px] h-[8px]" viewBox="0 0 8 8"><path d="M0 4h8M4 0v8" stroke="#44536f" stroke-width="2"/></svg></button>
    </div>
</footer>

<!-- Top edge of the taskbar -->
<div class="h-[4px] shrink-0 flex bg-[#2a6de4]"><div class="w-[96px] bg-[#3f9a3c]"></div><div class="ml-auto w-[57px] bg-[#18a5f2]"></div></div>

<script>
    // centimetre at 75 % zoom
    const CM = 28.34;
    const ns = 'http://www.w3.org/2000/svg';

    function add(svg, tag, attrs, text) {
        const el = document.createElementNS(ns, tag);
        for (const k in attrs) el.setAttribute(k, attrs[k]);
        if (text) el.textContent = text;
        svg.appendChild(el);
    }

    const h = document.getElementById('hruler');
    for (let q = -13; q <= 71; q++) {
        const x = 356 + q * CM / 4;
        if (x < 268 || x > 862 || q === 0 || q === 59) continue;
        if (q % 4 === 0) add(h, 'text', { x, y: 158 }, String(Math.abs(q / 4)));
        else if (q % 2 === 0) add(h, 'rect', { x: Math.round(x), y: 152, width: 1, height: 5 });
        else add(h, 'rect', { x: Math.round(x), y: 154, width: 1, height: 2 });
    }
    for (let x = 391; x < 771; x += 35.4) add(h, 'rect', { x: Math.round(x), y: 162, width: 1, height: 3, fill: '#6a86b8' });
    add(h, 'path', { d: 'M352.5 145.500h8v3l-4 4-4-4zM352.5 160.500v-3l4-4 4 4v3zM352.5 161.500h8v5h-8z', fill: '#dfe8f6', stroke: '#5f7099' });
    add(h, 'path', { d: 'M767.5 160.500v-4l4-4 4 4v4z', fill: '#dfe8f6', stroke: '#5f7099' });

    const v = document.getElementById('vruler');
    for (let q = -9; q <= 108; q++) {
        const y = 367.3 + q * CM / 4;
        if (q === 0) continue;
        if (q % 4 === 0) add(v, 'text', { transform: `translate(15 ${y}) rotate(-90)` }, String(Math.abs(q / 4)));
        else if (q % 2 === 0) add(v, 'rect', { x: 10, y: Math.round(y), width: 5, height: 1 });
        else add(v, 'rect', { x: 12, y: Math.round(y), width: 2, height: 1 });
    }
</script>
</body>
</html>
